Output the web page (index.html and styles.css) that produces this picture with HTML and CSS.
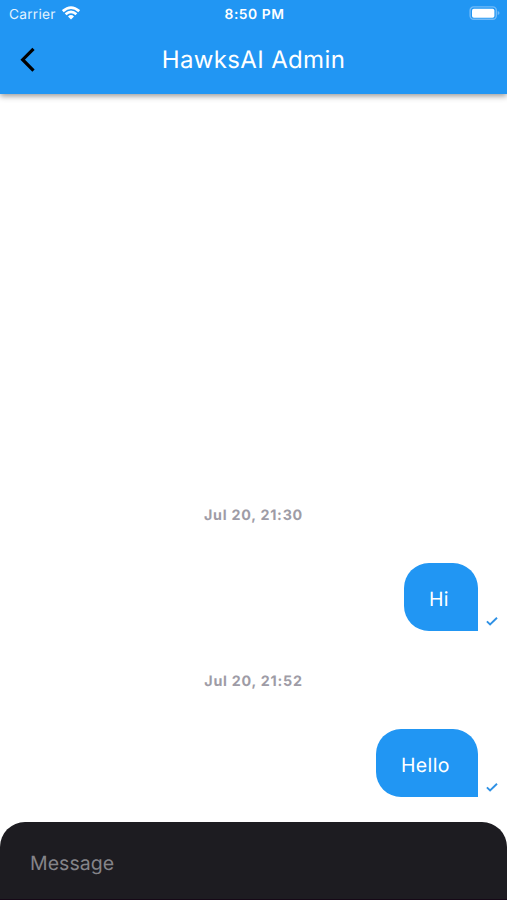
FILE: index.html
```html
<!DOCTYPE html>
<html lang="en">
<head>
<meta charset="utf-8">
<title>HawksAI Admin</title>
<link rel="stylesheet" href="styles.css">
</head>
<body>
<main class="app">
  <header class="header">
    <div class="status">
      <div class="carrier"><span class="carrier-name">Carrier</span>
        <svg class="wifi" width="18" height="14" viewBox="0 0 18 14" fill="none" stroke="#fff" stroke-width="2.7"><path d="M.8 5.1Q9-1.9 17.2 5.1M3.6 8.2Q9 3.5 14.4 8.2"/><path d="M6 10.4Q9 7.8 12 10.4L9 13.5Z" fill="#fff" stroke="none"/></svg>
      </div>
      <time class="clock">8:50 PM</time>
      <svg class="battery" width="31" height="15" viewBox="0 0 31 15"><rect x="1.1" y=".9" width="26.2" height="12.4" rx="3.5" fill="none" stroke="#72bbf8" stroke-width="1.4"/><rect x="3" y="2.7" width="22.4" height="9" rx="1.8" fill="#fff"/><path d="M28.7 5Q30.5 5.5 30.5 7T28.7 9Z" fill="#72bbf8"/></svg>
    </div>
    <div class="toolbar">
      <button class="back" aria-label="Back"><svg width="15" height="26" viewBox="0 0 15 26" fill="none" stroke="#000" stroke-width="3.2"><path d="M13.5 1.8L2.7 12.7L13.5 23.6"/></svg></button>
      <h1 class="title">HawksAI Admin</h1>
    </div>
  </header>
  <section class="messages">
    <time class="date">Jul 20, 21:30</time>
    <div class="row"><p class="bubble hi"><span class="text">Hi</span></p><svg class="check" width="12" height="9" viewBox="0 0 12 9" fill="none" stroke="#2f91e5" stroke-width="1.9"><path d="M.9 4.3L4.1 7.5L11 .8"/></svg></div>
    <time class="date second">Jul 20, 21:52</time>
    <div class="row"><p class="bubble hello"><span class="text">Hello</span></p><svg class="check" width="12" height="9" viewBox="0 0 12 9" fill="none" stroke="#2f91e5" stroke-width="1.9"><path d="M.9 4.3L4.1 7.5L11 .8"/></svg></div>
  </section>
  <footer class="composer"><span class="placeholder">Message</span></footer>
</main>
</body>
</html>
```
FILE: styles.css
```css
* { box-sizing: border-box; }
body { margin: 0; font-family: Inter, "Liberation Sans", sans-serif; background: #fff; text-rendering: geometricPrecision; }
.app { height: 900px; display: flex; flex-direction: column; overflow: hidden; }
.header { height: 94px; flex: none; background: #2196f3; color: #fff; box-shadow: 0 2px 6px rgba(0,0,0,.42); }
.status { height: 27px; padding: 0 7px 0 9px; display: grid; grid-template-columns: 1fr auto 1fr; align-items: center; }
.carrier { display: flex; align-items: center; gap: 6px; font-size: 13.7px; color: #e4f4ff; }
.carrier-name { width: 47px; padding-top: 2px; letter-spacing: .25px; white-space: nowrap; }
.wifi { margin-top: -1px; }
.clock { padding-top: 2px; font-size: 13.8px; font-weight: 600; letter-spacing: .55px; }
.battery { justify-self: end; }
.toolbar { height: 66px; display: grid; grid-template-columns: 50px 1fr 50px; align-items: center; }
.back { border: 0; background: none; padding: 0 0 0 20px; display: flex; }
.title { margin: 0 0 1px; text-align: center; font-size: 24px; line-height: 30px; font-weight: 400; letter-spacing: .35px; }
.messages { flex: 1; padding-top: 412px; }
.date { display: block; height: 20px; line-height: 20px; text-align: center; font-size: 14.3px; font-weight: 700; letter-spacing: .75px; color: #9e9ca6; }
.row { display: flex; justify-content: flex-end; align-items: flex-end; gap: 8px; padding-right: 9px; margin-top: 37px; }
.bubble { margin: 0; height: 68px; padding: 3px 0 0 25px; display: flex; align-items: center; background: #2196f3; color: #fff; border-radius: 25px 25px 0 25px; font-size: 19.5px; letter-spacing: .35px; }
.hi { width: 74px; }
.hello { width: 102px; }
.check { margin-bottom: 5px; }
.second { margin-top: 41px; }
.composer { height: 78px; flex: none; padding: 4px 30px 0; display: flex; align-items: center; background: #1d1c21; border-bottom: 1px solid #160817; border-radius: 25px 25px 0 0; color: #858489; font-size: 19.5px; letter-spacing: .05px; }
```
